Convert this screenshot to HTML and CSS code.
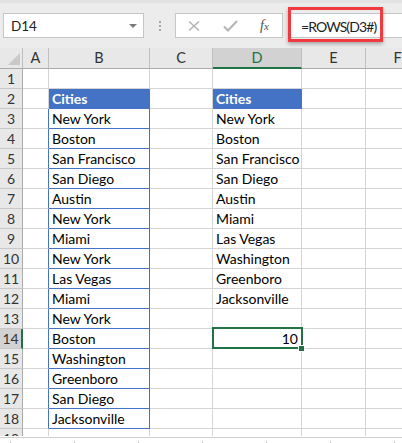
FILE: index.html
```html
<!DOCTYPE html>
<html>
<head>
<meta charset="utf-8">
<link rel="stylesheet" href="styles.css">
</head>
<body>
<div class="app">
  <div class="toolbar">
    <div class="namebox"><span class="name">D14</span><span class="caret"></span></div>
    <div class="grip"><i></i><i></i><i></i></div>
    <div class="btns">
      <svg class="ico-x" width="12" height="10" viewBox="0 0 12 10"><path d="M1 0.5 L11 9.5 M11 0.5 L1 9.5" stroke="#b4b4b4" stroke-width="1.5" fill="none"/></svg>
      <svg class="ico-ok" width="15" height="12" viewBox="0 0 15 12"><path d="M1 6.5 L5 10.5 L14 1" stroke="#b4b4b4" stroke-width="2" fill="none"/></svg>
      <span class="fx">f<span class="fxx">x</span></span>
    </div>
    <div class="formula">
      <span class="ftext">=ROWS(D3#)</span>
      <span class="callout"></span>
    </div>
  </div>

  <div class="sheet">
    <div class="row head">
      <div class="corner"><svg width="22" height="20" viewBox="0 0 22 20"><path d="M8 17 L20 17 L20 5 Z" fill="#c9c9c9"/></svg></div>
      <div class="ch">A</div><div class="ch">B</div><div class="ch">C</div><div class="ch sel">D</div><div class="ch">E</div><div class="ch">F</div>
    </div>
    <div class="row"><div class="rh">1</div><div class="c"></div><div class="c"></div><div class="c"></div><div class="c"></div><div class="c"></div><div class="c"></div></div>
    <div class="row"><div class="rh">2</div><div class="c"></div><div class="c th">Cities</div><div class="c"></div><div class="c th">Cities</div><div class="c"></div><div class="c"></div></div>
    <div class="row"><div class="rh">3</div><div class="c edge"></div><div class="c box">New York</div><div class="c"></div><div class="c">New York</div><div class="c"></div><div class="c"></div></div>
    <div class="row"><div class="rh">4</div><div class="c edge"></div><div class="c box">Boston</div><div class="c"></div><div class="c">Boston</div><div class="c"></div><div class="c"></div></div>
    <div class="row"><div class="rh">5</div><div class="c edge"></div><div class="c box">San Francisco</div><div class="c"></div><div class="c">San Francisco</div><div class="c"></div><div class="c"></div></div>
    <div class="row"><div class="rh">6</div><div class="c edge"></div><div class="c box">San Diego</div><div class="c"></div><div class="c">San Diego</div><div class="c"></div><div class="c"></div></div>
    <div class="row"><div class="rh">7</div><div class="c edge"></div><div class="c box">Austin</div><div class="c"></div><div class="c">Austin</div><div class="c"></div><div class="c"></div></div>
    <div class="row"><div class="rh">8</div><div class="c edge"></div><div class="c box">New York</div><div class="c"></div><div class="c">Miami</div><div class="c"></div><div class="c"></div></div>
    <div class="row"><div class="rh">9</div><div class="c edge"></div><div class="c box">Miami</div><div class="c"></div><div class="c">Las Vegas</div><div class="c"></div><div class="c"></div></div>
    <div class="row"><div class="rh">10</div><div class="c edge"></div><div class="c box">New York</div><div class="c"></div><div class="c">Washington</div><div class="c"></div><div class="c"></div></div>
    <div class="row"><div class="rh">11</div><div class="c edge"></div><div class="c box">Las Vegas</div><div class="c"></div><div class="c">Greenboro</div><div class="c"></div><div class="c"></div></div>
    <div class="row"><div class="rh">12</div><div class="c edge"></div><div class="c box">Miami</div><div class="c"></div><div class="c">Jacksonville</div><div class="c"></div><div class="c"></div></div>
    <div class="row"><div class="rh">13</div><div class="c edge"></div><div class="c box">New York</div><div class="c"></div><div class="c"></div><div class="c"></div><div class="c"></div></div>
    <div class="row"><div class="rh sel">14</div><div class="c edge"></div><div class="c box">Boston</div><div class="c"></div><div class="c num active">10<span class="selbox"></span><span class="handle"></span></div><div class="c"></div><div class="c"></div></div>
    <div class="row"><div class="rh">15</div><div class="c edge"></div><div class="c box">Washington</div><div class="c"></div><div class="c"></div><div class="c"></div><div class="c"></div></div>
    <div class="row"><div class="rh">16</div><div class="c edge"></div><div class="c box">Greenboro</div><div class="c"></div><div class="c"></div><div class="c"></div><div class="c"></div></div>
    <div class="row"><div class="rh">17</div><div class="c edge"></div><div class="c box">San Diego</div><div class="c"></div><div class="c"></div><div class="c"></div><div class="c"></div></div>
    <div class="row"><div class="rh">18</div><div class="c edge"></div><div class="c box">Jacksonville</div><div class="c"></div><div class="c"></div><div class="c"></div><div class="c"></div></div>
    <div class="row"><div class="rh">19</div><div class="c"></div><div class="c"></div><div class="c"></div><div class="c"></div><div class="c"></div><div class="c"></div></div>
  </div>
  <div class="ruler"></div>
</div>
</body>
</html>
```
FILE: styles.css
```css
html, body {
  margin: 0;
  padding: 0;
  background: #ffffff;
}
.app {
  width: 402px;
  height: 443px;
  overflow: hidden;
  font-family: Lato, "Noto Sans", sans-serif;
  color: #000;
}
/* toolbar */
.toolbar {
  height: 48px;
  box-sizing: border-box;
  background: #ececec;
  border-top: 3px solid #e2e2e2;
  padding: 10px 0 0 3px;
  display: flex;
  align-items: flex-start;
}
.namebox {
  width: 141px;
  height: 25px;
  box-sizing: border-box;
  background: #fff;
  border: 1px solid #c6c6c6;
  display: flex;
  align-items: center;
  padding: 0 6px 0 7px;
  justify-content: space-between;
}
.name {
  font-size: 13.5px;
  color: #222;
}
.caret {
  width: 0;
  height: 0;
  border-left: 4px solid transparent;
  border-right: 4px solid transparent;
  border-top: 4px solid #7a7a7a;
}
.grip {
  margin-left: 15px;
  margin-top: 8px;
  display: flex;
  flex-direction: column;
  gap: 2px;
}
.grip i {
  display: block;
  width: 2px;
  height: 2px;
  background: #a8a8a8;
}
.btns {
  margin-left: 14px;
  width: 108px;
  height: 25px;
  box-sizing: border-box;
  background: #fff;
  border: 1px solid #c6c6c6;
  display: flex;
  align-items: center;
  padding-left: 12px;
}
.ico-x { margin-top: 1px; }
.ico-ok { margin-left: 23px; }
.fx {
  margin-left: 22px;
  font-family: "Liberation Serif", serif;
  font-style: italic;
  font-size: 14px;
  color: #505050;
}
.fxx {
  font-size: 11px;
}
.formula {
  margin-left: 5px;
  flex: 1;
  height: 25px;
  box-sizing: border-box;
  background: #fff;
  border: 1px solid #c6c6c6;
  border-right: none;
  position: relative;
  display: flex;
  align-items: center;
  padding-left: 12px;
}
.ftext {
  font-size: 14px;
  letter-spacing: -0.9px;
  color: #222;
  margin-top: 2px;
}
.callout {
  position: absolute;
  left: -1px;
  top: -7px;
  width: 95px;
  height: 35px;
  box-sizing: border-box;
  border: 3px solid #ef3a40;
  box-shadow: 0 2px 4px rgba(0,0,0,0.3);
}
/* sheet */
.sheet {
  height: 388px;
  overflow: hidden;
}
.row {
  display: grid;
  grid-template-columns: 23px 26px 101px 63px 89px 64px 64px;
  height: 20px;
}
.row > div {
  box-sizing: border-box;
  border-right: 1px solid #d4d4d4;
  border-bottom: 1px solid #d4d4d4;
  white-space: nowrap;
  overflow: visible;
  line-height: 19px;
  font-size: 14px;
}
.row.head {
  height: 21px;
}
.row.head > div {
  background: #e8e8e8;
  border-right: 1px solid #bfbfbf;
  border-bottom: 1px solid #ababab;
  text-align: center;
  line-height: 20px;
  font-size: 14.5px;
  color: #333;
}
.row.head .corner {
  padding: 0;
  line-height: 0;
}
.row.head .ch.sel {
  background: #d2d2d2;
  color: #217346;
  border-bottom: 2px solid #217346;
  line-height: 19px;
}
.rh {
  background: #e8e8e8;
  text-align: center;
  color: #333;
}
.row > .rh {
  border-right: 1px solid #ababab;
  border-bottom: 1px solid #c8c8c8;
}
.row > .rh.sel {
  background: #d2d2d2;
  border-right: 2px solid #217346;
}
.c {
  padding: 0 3px;
  overflow: hidden;
}
.row > .th {
  background: #4472c4;
  color: #fff;
  font-weight: bold;
  border-right-color: #4472c4;
  border-bottom-color: #4472c4;
}
.row > .box {
  border-right-color: #4472c4;
  border-bottom-color: #4472c4;
}
.row > .edge {
  border-right-color: #4472c4;
}
.num {
  text-align: right;
}
.row > .active {
  position: relative;
  padding-right: 3px;
}
.selbox {
  position: absolute;
  left: -1px;
  top: -2px;
  right: -2px;
  bottom: -1px;
  border: 2px solid #217346;
}
.handle {
  position: absolute;
  right: -4px;
  bottom: -4px;
  width: 5px;
  height: 5px;
  background: #217346;
  border: 1px solid #fff;
}
.ruler {
  height: 7px;
  box-sizing: border-box;
  border-top: 1px solid #d0d0d0;
  margin-top: 1px;
  background: repeating-linear-gradient(90deg, transparent 0 10px, #c8c8c8 10px 11px, transparent 11px 64px) bottom / 100% 3px no-repeat, #fff;
}
```
